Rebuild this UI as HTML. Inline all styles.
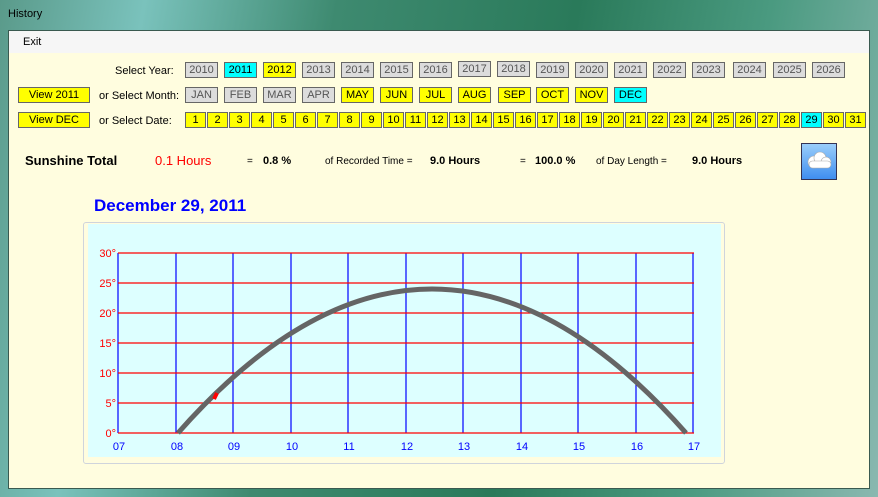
<!DOCTYPE html>
<html><head><meta charset="utf-8"><style>
*{margin:0;padding:0;box-sizing:border-box}
body{width:878px;height:497px;overflow:hidden;position:relative;font-family:"Liberation Sans",sans-serif;font-size:11px;
background:linear-gradient(100deg,#5a9a8a 0%,#7ac2bc 15%,#3e8a70 35%,#2a7a5a 60%,#4a9a80 80%,#8ab8b0 100%)}
.abs{position:absolute}
.title{left:8px;top:8px;font-size:11px;color:#000}
.client{left:8px;top:30px;width:862px;height:459px;background:#fffddf;border:1px solid #3a5a50}
.menu{left:9px;top:31px;width:860px;height:22px;background:#f6f6f6}
.b{position:absolute;height:16px;border:1px solid #666;text-align:center;font-size:11px;line-height:14px;color:#000}
.g{background:#dcdcdc;color:#555}
.y{background:#ffff00}
.c{background:#00ffff}
.lbl{position:absolute;font-size:11px;color:#000;white-space:nowrap}
.t{position:absolute;white-space:nowrap}
</style></head><body>
<div class="abs title">History</div>
<div class="abs client"></div>
<div class="abs menu"></div>
<div class="lbl" style="left:23px;top:36px">Exit</div>

<div class="lbl" style="left:115px;top:65px">Select Year:</div>
<div class="b g" style="left:185px;top:62px;width:33px">2010</div>
<div class="b c" style="left:224px;top:62px;width:33px">2011</div>
<div class="b y" style="left:263px;top:62px;width:33px">2012</div>
<div class="b g" style="left:302px;top:62px;width:33px">2013</div>
<div class="b g" style="left:341px;top:62px;width:33px">2014</div>
<div class="b g" style="left:380px;top:62px;width:33px">2015</div>
<div class="b g" style="left:419px;top:62px;width:33px">2016</div>
<div class="b g" style="left:458px;top:61px;width:33px">2017</div>
<div class="b g" style="left:497px;top:61px;width:33px">2018</div>
<div class="b g" style="left:536px;top:62px;width:33px">2019</div>
<div class="b g" style="left:575px;top:62px;width:33px">2020</div>
<div class="b g" style="left:614px;top:62px;width:33px">2021</div>
<div class="b g" style="left:653px;top:62px;width:33px">2022</div>
<div class="b g" style="left:692px;top:62px;width:33px">2023</div>
<div class="b g" style="left:733px;top:62px;width:33px">2024</div>
<div class="b g" style="left:773px;top:62px;width:33px">2025</div>
<div class="b g" style="left:812px;top:62px;width:33px">2026</div>

<div class="b y" style="left:18px;top:87px;width:72px">View 2011</div>
<div class="lbl" style="left:99px;top:90px">or Select Month:</div>
<div class="b g" style="left:185px;top:87px;width:33px">JAN</div>
<div class="b g" style="left:224px;top:87px;width:33px">FEB</div>
<div class="b g" style="left:263px;top:87px;width:33px">MAR</div>
<div class="b g" style="left:302px;top:87px;width:33px">APR</div>
<div class="b y" style="left:341px;top:87px;width:33px">MAY</div>
<div class="b y" style="left:380px;top:87px;width:33px">JUN</div>
<div class="b y" style="left:419px;top:87px;width:33px">JUL</div>
<div class="b y" style="left:458px;top:87px;width:33px">AUG</div>
<div class="b y" style="left:498px;top:87px;width:33px">SEP</div>
<div class="b y" style="left:536px;top:87px;width:33px">OCT</div>
<div class="b y" style="left:575px;top:87px;width:33px">NOV</div>
<div class="b c" style="left:614px;top:87px;width:33px">DEC</div>

<div class="b y" style="left:18px;top:112px;width:72px">View DEC</div>
<div class="lbl" style="left:99px;top:115px">or Select Date:</div>
<div class="b y" style="left:185px;top:112px;width:21px">1</div>
<div class="b y" style="left:207px;top:112px;width:21px">2</div>
<div class="b y" style="left:229px;top:112px;width:21px">3</div>
<div class="b y" style="left:251px;top:112px;width:21px">4</div>
<div class="b y" style="left:273px;top:112px;width:21px">5</div>
<div class="b y" style="left:295px;top:112px;width:21px">6</div>
<div class="b y" style="left:317px;top:112px;width:21px">7</div>
<div class="b y" style="left:339px;top:112px;width:21px">8</div>
<div class="b y" style="left:361px;top:112px;width:21px">9</div>
<div class="b y" style="left:383px;top:112px;width:21px">10</div>
<div class="b y" style="left:405px;top:112px;width:21px">11</div>
<div class="b y" style="left:427px;top:112px;width:21px">12</div>
<div class="b y" style="left:449px;top:112px;width:21px">13</div>
<div class="b y" style="left:471px;top:112px;width:21px">14</div>
<div class="b y" style="left:493px;top:112px;width:21px">15</div>
<div class="b y" style="left:515px;top:112px;width:21px">16</div>
<div class="b y" style="left:537px;top:112px;width:21px">17</div>
<div class="b y" style="left:559px;top:112px;width:21px">18</div>
<div class="b y" style="left:581px;top:112px;width:21px">19</div>
<div class="b y" style="left:603px;top:112px;width:21px">20</div>
<div class="b y" style="left:625px;top:112px;width:21px">21</div>
<div class="b y" style="left:647px;top:112px;width:21px">22</div>
<div class="b y" style="left:669px;top:112px;width:21px">23</div>
<div class="b y" style="left:691px;top:112px;width:21px">24</div>
<div class="b y" style="left:713px;top:112px;width:21px">25</div>
<div class="b y" style="left:735px;top:112px;width:21px">26</div>
<div class="b y" style="left:757px;top:112px;width:21px">27</div>
<div class="b y" style="left:779px;top:112px;width:21px">28</div>
<div class="b c" style="left:801px;top:112px;width:21px">29</div>
<div class="b y" style="left:823px;top:112px;width:21px">30</div>
<div class="b y" style="left:845px;top:112px;width:21px">31</div>

<div class="t" style="left:25px;top:153px;font-size:13px;font-weight:bold">Sunshine Total</div>
<div class="t" style="left:155px;top:153px;font-size:13px;color:#f00">0.1 Hours</div>
<div class="t" style="left:247px;top:156px;font-size:10px">=</div>
<div class="t" style="left:263px;top:155px;font-size:11px;font-weight:bold">0.8 %</div>
<div class="t" style="left:325px;top:156px;font-size:10px">of Recorded Time =</div>
<div class="t" style="left:430px;top:155px;font-size:11px;font-weight:bold">9.0 Hours</div>
<div class="t" style="left:520px;top:156px;font-size:10px">=</div>
<div class="t" style="left:535px;top:155px;font-size:11px;font-weight:bold">100.0 %</div>
<div class="t" style="left:596px;top:156px;font-size:10px">of Day Length =</div>
<div class="t" style="left:692px;top:155px;font-size:11px;font-weight:bold">9.0 Hours</div>
<div class="abs" style="left:801px;top:143px;width:36px;height:37px;border:1px solid #335;background:linear-gradient(#9acefa,#3f8ef0)">
<svg width="34" height="35" viewBox="0 0 34 35"><g fill="#fff" stroke="#aaa" stroke-width="0.6"><circle cx="12" cy="18" r="6"/><circle cx="18" cy="14" r="6"/><circle cx="24" cy="18" r="5"/><rect x="7" y="17" width="22" height="7" rx="3.5"/></g></svg></div>

<div class="t" style="left:94px;top:196px;font-size:17px;font-weight:bold;color:#0000ff">December 29, 2011</div>

<div class="abs" style="left:83px;top:222px;width:642px;height:242px;border:1px solid #cfd4dc;border-radius:3px"></div>
<div class="abs" style="left:88px;top:224px;width:633px;height:233px;background:#ddffff"></div>
<svg class="abs" style="left:0;top:0" width="878" height="497">
<g stroke="#0000ff" stroke-width="1.2">
<line x1="118" y1="253" x2="118" y2="433"/>
<line x1="176" y1="253" x2="176" y2="433"/>
<line x1="233" y1="253" x2="233" y2="433"/>
<line x1="291" y1="253" x2="291" y2="433"/>
<line x1="348" y1="253" x2="348" y2="433"/>
<line x1="406" y1="253" x2="406" y2="433"/>
<line x1="463" y1="253" x2="463" y2="433"/>
<line x1="521" y1="253" x2="521" y2="433"/>
<line x1="578" y1="253" x2="578" y2="433"/>
<line x1="636" y1="253" x2="636" y2="433"/>
<line x1="693" y1="253" x2="693" y2="433"/>
</g>
<g stroke="#ff0000" stroke-width="1.2">
<line x1="118" y1="253" x2="694" y2="253"/>
<line x1="118" y1="283" x2="694" y2="283"/>
<line x1="118" y1="313" x2="694" y2="313"/>
<line x1="118" y1="343" x2="694" y2="343"/>
<line x1="118" y1="373" x2="694" y2="373"/>
<line x1="118" y1="403" x2="694" y2="403"/>
<line x1="118" y1="433" x2="694" y2="433"/>
</g>
<path d="M178 433 Q432 145 686 433" fill="none" stroke="#656565" stroke-width="5"/>
<line x1="214" y1="399" x2="217" y2="393" stroke="#ff0000" stroke-width="4"/>
<g fill="#ff0000" font-size="11" text-anchor="end" font-family="Liberation Sans,sans-serif">
<text x="116" y="257">30°</text><text x="116" y="287">25°</text><text x="116" y="317">20°</text>
<text x="116" y="347">15°</text><text x="116" y="377">10°</text><text x="116" y="407">5°</text><text x="116" y="437">0°</text>
</g>
<g fill="#0000ff" font-size="11" text-anchor="middle" font-family="Liberation Sans,sans-serif">
<text x="119" y="450">07</text><text x="177" y="450">08</text><text x="234" y="450">09</text><text x="292" y="450">10</text>
<text x="349" y="450">11</text><text x="407" y="450">12</text><text x="464" y="450">13</text><text x="522" y="450">14</text>
<text x="579" y="450">15</text><text x="637" y="450">16</text><text x="694" y="450">17</text>
</g>
</svg>
</body></html>
